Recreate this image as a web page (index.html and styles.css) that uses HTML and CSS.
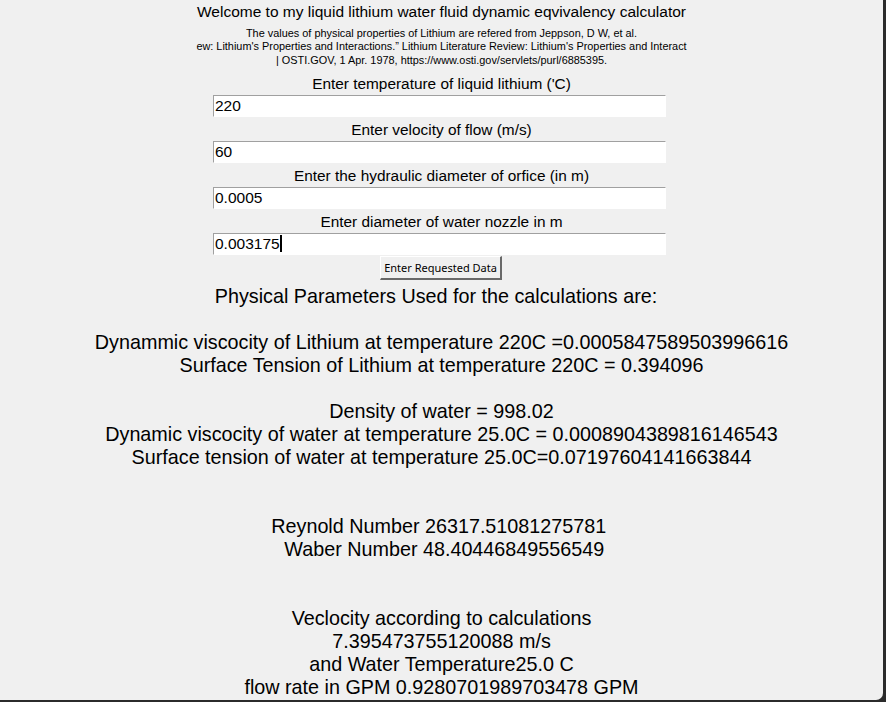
FILE: index.html
```html
<!DOCTYPE html>
<html>
<head>
<meta charset="utf-8">
<title>Lithium water calculator</title>
<link rel="stylesheet" href="styles.css">
</head>
<body>
<div class="window">
  <div class="title">Welcome to my liquid lithium water fluid dynamic eqvivalency calculator</div>
  <div class="refs">
    <div class="ref-line">The values of physical properties of Lithium are refered from Jeppson, D W, et al.</div>
    <div class="ref-line">ew: Lithium's Properties and Interactions.” Lithium Literature Review: Lithium's Properties and Interact</div>
    <div class="ref-line">| OSTI.GOV, 1 Apr. 1978, https://www.osti.gov/servlets/purl/6885395.</div>
  </div>
  <div class="label">Enter temperature of liquid lithium ('C)</div>
  <div class="entry">220</div>
  <div class="label">Enter velocity of flow (m/s)</div>
  <div class="entry">60</div>
  <div class="label">Enter the hydraulic diameter of orfice (in m)</div>
  <div class="entry">0.0005</div>
  <div class="label">Enter diameter of water nozzle in m</div>
  <div class="entry">0.003175<span class="caret"></span></div>
  <button class="btn" type="button">Enter Requested Data</button>
  <div class="results">
    <div class="line">Physical Parameters Used for the calculations are:  </div>
    <div class="line"> </div>
    <div class="line">Dynammic viscocity of Lithium at temperature 220C =0.0005847589503996616</div>
    <div class="line">Surface Tension of Lithium at temperature 220C = 0.394096</div>
    <div class="line"> </div>
    <div class="line">Density of water = 998.02</div>
    <div class="line">Dynamic viscocity of water at temperature 25.0C = 0.0008904389816146543</div>
    <div class="line">Surface tension of water at temperature 25.0C=0.07197604141663844</div>
    <div class="line"> </div>
    <div class="line"> </div>
    <div class="line">Reynold Number 26317.51081275781 </div>
    <div class="line"> Waber Number 48.40446849556549</div>
    <div class="line"> </div>
    <div class="line"> </div>
    <div class="line">Veclocity according to calculations</div>
    <div class="line">7.395473755120088 m/s</div>
    <div class="line">and Water Temperature25.0 C</div>
    <div class="line">flow rate in GPM 0.9280701989703478 GPM</div>
  </div>
</div>
</body>
</html>
```
FILE: styles.css
```css
html, body {
  margin: 0;
  padding: 0;
  background: #2b2b2b;
  width: 886px;
  height: 702px;
  overflow: hidden;
}
.window {
  width: 883px;
  height: 700px;
  background: #f0f0f0;
  border-bottom-right-radius: 7px;
  overflow: hidden;
  display: flex;
  flex-direction: column;
  align-items: center;
  font-family: "Liberation Sans", Arial, sans-serif;
  color: #000;
}
.title {
  font-size: 15.5px;
  line-height: 24px;
  white-space: nowrap;
}
.refs {
  margin-top: 2.5px;
  font-size: 10.9px;
  line-height: 13.5px;
  text-align: center;
}
.ref-line {
  white-space: nowrap;
}
.label {
  margin-top: 4px;
  height: 22px;
  padding-top: 2px;
  font-size: 15.4px;
  line-height: 22px;
  white-space: nowrap;
}
.entry {
  box-sizing: border-box;
  width: 453px;
  height: 22px;
  margin-right: 4px;
  padding-left: 1px;
  background: #fff;
  border-top: 1px solid #a0a0a0;
  border-left: 1px solid #a0a0a0;
  border-right: 1px solid #fff;
  border-bottom: 1px solid #fff;
  font-size: 15.5px;
  line-height: 20px;
  white-space: nowrap;
}
.entry + .label {
  margin-top: 0;
}
.caret {
  display: inline-block;
  width: 2px;
  height: 17px;
  background: #000;
  vertical-align: -3px;
}
.btn {
  box-sizing: border-box;
  margin-top: 1px;
  margin-right: 1px;
  width: 122px;
  height: 24px;
  padding: 0;
  background: #f0f0f0;
  border-style: solid;
  border-width: 1px 2px 2px 1px;
  border-color: #fff #696969 #696969 #fff;
  font-family: "Noto Sans", "Open Sans", sans-serif;
  font-size: 11px;
  color: #000;
}
.results {
  margin-top: 4.5px;
  font-size: 19.75px;
  line-height: 23px;
  text-align: center;
}
.line {
  white-space: pre;
  height: 23px;
}
```
